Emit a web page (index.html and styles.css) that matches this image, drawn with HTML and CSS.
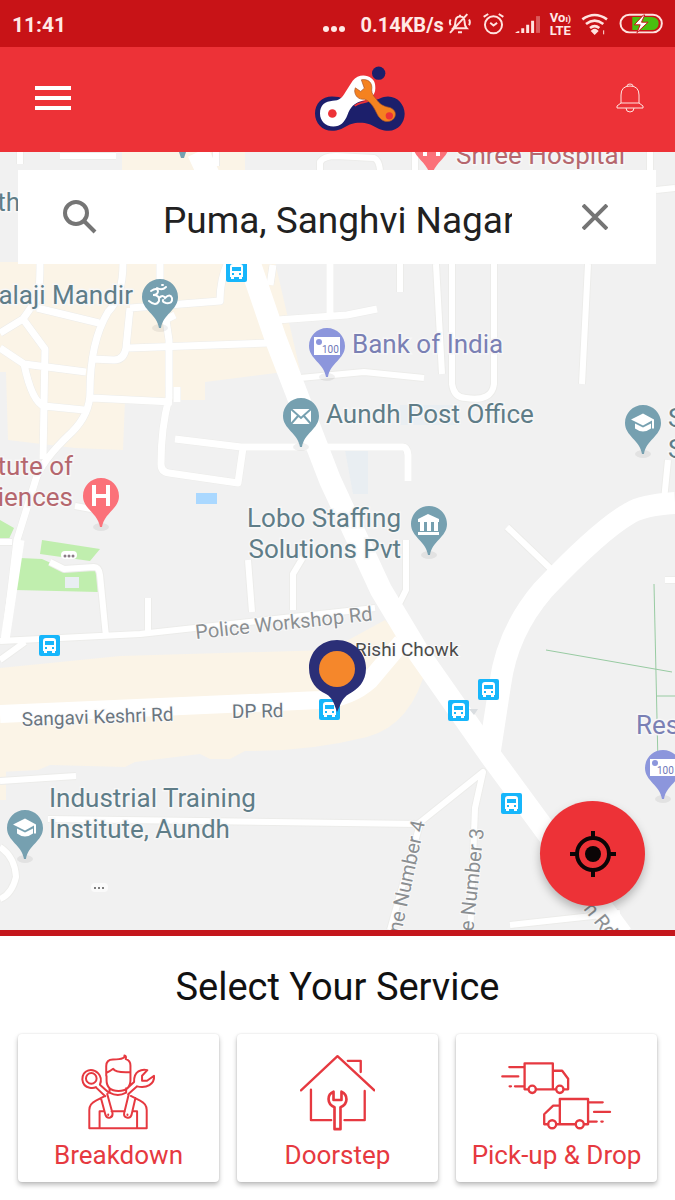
FILE: index.html
```html
<!DOCTYPE html>
<html lang="en">
<head>
<meta charset="utf-8">
<meta name="viewport" content="width=device-width, initial-scale=1">
<title>Select Your Service</title>
<link rel="stylesheet" href="styles.css">
</head>
<body>
<div class="screen">
  <div class="status">
    <span class="status-time">11:41</span>
    <div class="status-right">
      <svg class="status-dots" viewBox="0 0 24 8" width="24" height="8" aria-hidden="true"><circle cx="4" cy="4" r="3"/><circle cx="12" cy="4" r="3"/><circle cx="20" cy="4" r="3"/></svg>
      <span class="status-rate">0.14KB/s</span>
      <svg class="line" viewBox="418 36 72 68" width="24" height="23" aria-hidden="true"><path d="M434 84q6-6 6-17 0-18 14-18 14 0 14 18 0 11 6 17zM448 96h12M476 42 424 98M426 58q-5 8 0 17M481 58q5 8 0 17M454 49v-5"/></svg>
      <svg class="line alarm" viewBox="516 36 70 68" width="23" height="23" aria-hidden="true"><circle cx="551" cy="74" r="26"/><path d="m541 68 10 8 11-8M521 50l14-9M581 50l-14-9"/></svg>
      <svg class="signal" viewBox="614 40 76 60" width="25" height="20" aria-hidden="true"><path d="M614 97q6-6 13-6v6zM633 83h9v14h-9zM648 72h9v25h-9zM663 60h9v37h-9z"/><path class="faint" d="M678 46h12v51h-12z"/></svg>
      <span class="volte"><span>Vo<small>ı)</small></span><span>LTE</span></span>
      <svg class="wifi" viewBox="814 38 84 66" width="28" height="22" aria-hidden="true"><path d="M818 57q37-26 74 0M829 71q26-20 52 0M841 83q14-11 28 0"/><path d="m849 92 6 6 6-6q-6-5-12 0z"/><path class="thin" d="M882 90v12"/></svg>
      <svg class="battery" viewBox="926 38 136 64" width="45" height="21" aria-hidden="true"><rect class="case" x="930" y="43" width="126" height="54" rx="27"/><path class="charge" d="M966 50h58q22 0 22 20t-22 20h-58z"/><path class="bolt" d="m1000 44-28 30h18l-10 24 34-32h-20l10-22z"/></svg>
    </div>
  </div>

  <header class="appbar">
    <button class="icon-btn" aria-label="Open menu"><svg viewBox="0 0 36 26" width="36" height="26"><path class="menu-lines" d="M0 3h36M0 13h36M0 23h36"/></svg></button>
    <svg class="logo" viewBox="12 196 276 200" width="92" height="67" role="img" aria-label="Bike service logo">
      <path class="navy" d="M66 290c-30 0-51 22-51 51s22 52 51 52c38 0 42-24 84-24s48 24 86 24c28 0 48-24 48-51s-21-52-50-52c-18 0-28 10-44 12-26 4-70 4-86-4-14-6-22-8-38-8z"/>
      <circle class="navy" cx="206" cy="220" r="20"/>
      <path class="white" d="M30 341c0-26 16-36 38-38 20-2 28-8 38-26l22-34c14-20 42-20 56-8 10 8 12 16 12 30 0 26-20 32-36 37-30 8-38 20-48 44-8 20-20 34-42 34-24 0-40-17-40-39z"/>
      <path class="red-line" d="M190 298c-8 6-18 6-36 11-12 3-16 6-20 9"/>
      <circle class="red" cx="67" cy="341" r="13"/>
      <path class="orange" d="M154 240c20-4 35 8 31 31 0 10 6 18 14 27 10 14 18 20 36 24 18 4 24 16 20 28-6 16-28 20-42 8-12-10-14-24-24-38-8-12-14-18-26-22-16 2-28-8-29-25l2-9 16 11 11-10z"/>
      <circle class="red" cx="238" cy="348" r="11"/>
    </svg>
    <button class="icon-btn" aria-label="Notifications"><svg class="bell" viewBox="0 0 28 30" width="28" height="30"><path d="M5 20v-8q0-9 9-9t9 9v8M5 20l-4 3v2h26v-2l-4-3zM10 25q0 4 4 4t4-4M11 3q0-2 3-2t3 2"/></svg></button>
  </header>

  <main class="map">
    <svg class="map-art" viewBox="0 152 675 778" preserveAspectRatio="xMidYMid slice" role="img" aria-label="Map around Rishi Chowk, Aundh">
      <defs>
        <symbol id="pin" viewBox="0 0 36 52" overflow="visible"><ellipse cx="18" cy="49" rx="8" ry="4" fill="#000" opacity=".06"/><path d="M18 0C8 0 0 8 0 18c0 13 15 17 17 31h2c2-14 17-18 17-31C36 8 28 0 18 0z"/></symbol>
        <symbol id="bus" viewBox="0 0 21 21"><rect width="21" height="21" rx="2" fill="#17b6fb"/><path fill="#fff" d="M7 3h7q3 0 3 3v10h-1v2h-3v-2H8v2H5v-2H4V6q0-3 3-3z"/><path fill="#17b6fb" d="M6 6h9v4H6zM6 12h2v2H6zM13 12h2v2h-2z"/></symbol>
        <symbol id="cap" viewBox="0 0 26 20"><path fill="#fff" d="M13 1 1 7l12 6 9-5v8h2V7zM5 11v5q8 6 16 0v-5l-8 4z"/></symbol>
      </defs>

      <g class="built">
        <path d="M0 262h275l25 108-95 12v18h-80l-2 50-48-2-67-8-2-68H0zM122 152h123v20H122z"/>
        <path d="M0 668l120-12 210-6 55-30 42 45q-15 60-60 72-60 15-122 14l-15 8h-20l-10-5-65 8-10 5-75-2-12 5-38 2v-2H0zM0 760h6v40H0z"/>
      </g>
      <path class="pale" d="M345 450h23v44h-15zM400 405h60v20h-60z"/>
      <path class="park" d="M0 520l14 8-6 13H0zM42 540l58 9-10 12-50-7zM20 558l22 1 20 9 36-2v26l-83-2z"/>
      <path class="pale" d="M65 577h14v11H65z"/>
      <path class="water" d="M196 493h21v11h-21z"/>

      <g class="road edge">
        <path d="M40 262q0 30-3 37l-14 20-23 14M23 319l22 30-2 110M0 348l24 16 62 8M24 364q8 38 20 42l40 4M37 308l62 15M123 262q0 35-15 50-18 30-18 80 0 22-18 40-32 30-37 50L17 540 5 640M130 308l-4 40q-2 12-12 12l-22-1M130 308l90-7q0-22 8-39M160 262v18l9 60v58q-8 30-8 66 0 8 8 9l69 10 5-35M129 348l140-5M92 398l80 4M177 402v-15M163 321l12-6M175 439l66 8h162q4 0 5 8v26M277 320l70-5 30-6M330 262v54M270 285l3-20"/>
        <path d="M436 264l6 110M452 264v120q2 14 14 14 26 4 28-14V264M588 264l-6 120M400 264v28M424 378l-60-6-64 6M0 542h12M50 562l14 7 30-2q5 0 6 8l6 62M148 598v36M248 560l4 52M293 610v-36l12-20M406 540v50l-10 20M507 527l45 43M668 460l-4 40M0 641l140-7 235-26M0 660l25-18M0 781l76-5M48 819l370 5 65-52-8 36-5 130M420 824l-30 106M0 847q15 10 16 30-4 17-16 22M510 925l110-12M665 580h10M75 506l22 4M20 152v12M60 156h56M216 152v14M320 170v-8q4-6 16-6l38 2q5 2 6 12M415 152v18M650 152v18M656 190l19-2"/>
      </g>
      <g class="road">
        <path d="M40 262q0 30-3 37l-14 20-23 14M23 319l22 30-2 110M0 348l24 16 62 8M24 364q8 38 20 42l40 4M37 308l62 15M123 262q0 35-15 50-18 30-18 80 0 22-18 40-32 30-37 50L17 540 5 640M130 308l-4 40q-2 12-12 12l-22-1M130 308l90-7q0-22 8-39M160 262v18l9 60v58q-8 30-8 66 0 8 8 9l69 10 5-35M129 348l140-5M92 398l80 4M177 402v-15M163 321l12-6M175 439l66 8h162q4 0 5 8v26M277 320l70-5 30-6M330 262v54M270 285l3-20"/>
        <path class="lane" d="M436 264l6 110M452 264v120q2 14 14 14 26 4 28-14V264M588 264l-6 120M400 264v28M424 378l-60-6-64 6M0 542h12M50 562l14 7 30-2q5 0 6 8l6 62M148 598v36M248 560l4 52M293 610v-36l12-20M406 540v50l-10 20M507 527l45 43M668 460l-4 40M0 641l140-7 235-26M0 660l25-18M0 781l76-5M48 819l370 5 65-52-8 36-5 130M420 824l-30 106M0 847q15 10 16 30-4 17-16 22M510 925l110-12M665 580h10M75 506l22 4M20 152v12M60 156h56M216 152v14M320 170v-8q4-6 16-6l38 2q5 2 6 12M415 152v18M650 152v18M656 190l19-2"/>
      </g>
      <g class="highway">
        <path class="main" d="M198 152l52 112 26 76 54 140 51 110 39 65 70 100 55 75 77 105"/>
        <path class="main" d="M675 503q-32 2-45 10-30 17-87 77-36 42-43 95l-10 65"/>
        <path class="minor" d="M0 714l320-14q30-2 50-20l32-38"/>
        <path class="link" d="M20 540L5 640"/>
      </g>
      <path class="trail" d="M546 650l126 22M654 584l4 180M657 696h18"/>
      <path d="M469 709h9l-4 6z" fill="#d9dde0"/>

      <g class="pins">
        <use href="#pin" class="p-slate" x="142" y="279" width="36" height="52"/>
        <path class="glyph-line" d="M151 291q6-4 7 0 0 4-5 4 7 0 6 6-3 6-10 0M159 298q4-4 6 0 5-5 7 0 1 6-6 5-4-1-3-3M157 288q5 3 9-1M162 285h1"/>
        <use href="#pin" class="p-slate" x="283" y="398" width="36" height="52"/>
        <rect x="291" y="409" width="20" height="15" fill="#fff"/><path class="mail" d="M291 409l10 9 10-9M291 424l7-8M311 424l-7-8"/>
        <use href="#pin" class="p-slate" x="411" y="506" width="36" height="52"/>
        <path fill="#fff" d="M418 519l10-5 11 5v3h-21zM420 522h4v9h-4zM427 522h4v9h-4zM434 522h4v9h-4zM418 532h21v3h-21z"/>
        <use href="#pin" class="p-slate" x="625" y="405" width="36" height="52"/><use href="#cap" x="630" y="412" width="26" height="21"/>
        <use href="#pin" class="p-slate" x="7" y="810" width="36" height="52"/><use href="#cap" x="12" y="817" width="26" height="21"/>
        <use href="#pin" class="p-violet" x="309" y="328" width="36" height="52"/>
        <rect x="314" y="337" width="26" height="18" fill="#fff"/><circle cx="319" cy="342" r="3" class="p-violet"/><text class="note" x="322" y="353">100</text>
        <use href="#pin" class="p-violet" x="645" y="750" width="36" height="52"/>
        <rect x="650" y="759" width="26" height="17" fill="#fff"/><circle cx="655" cy="763" r="3" class="p-violet"/><text class="note" x="657" y="774">100</text>
        <use href="#pin" class="p-red" x="83" y="478" width="36" height="52"/><path class="h-mark" d="M94 485v21M108 485v21M94 496h14"/>
        <use href="#pin" class="p-red" x="413" y="127" width="36" height="52"/><path class="h-mark" d="M425 135v21M438 135v21"/>
        <path class="p-slate" d="M179 152h7l-2 6h-3z"/>
      </g>
      <g>
        <use href="#bus" x="226" y="261" width="21" height="21"/><use href="#bus" x="39" y="635" width="21" height="21"/><use href="#bus" x="319" y="699" width="21" height="21"/><use href="#bus" x="448" y="700" width="21" height="21"/><use href="#bus" x="478" y="679" width="21" height="21"/><use href="#bus" x="501" y="793" width="21" height="21"/>
      </g>

      <g class="label slate">
        <text x="20" y="211" text-anchor="end">th</text>
        <text x="133" y="304" text-anchor="end">alaji Mandir</text>
        <text x="326" y="423">Aundh Post Office</text>
        <text x="401" y="527" text-anchor="end">Lobo Staffing</text>
        <text x="401" y="558" text-anchor="end">Solutions Pvt</text>
        <text x="49" y="807">Industrial Training</text>
        <text x="49" y="838">Institute, Aundh</text>
        <text x="668" y="427">S</text><text x="668" y="458">S</text>
      </g>
      <g class="label violet"><text x="352" y="353">Bank of India</text><text x="636" y="734">Res</text></g>
      <g class="label rose"><text x="456" y="164">Shree Hospital</text><text x="73" y="475" text-anchor="end">tute of</text><text x="73" y="506" text-anchor="end">iences</text></g>
      <g class="street">
        <text class="grey" transform="translate(196 639) rotate(-6)">Police Workshop Rd</text>
        <text transform="translate(22 726) rotate(-2)">Sangavi Keshri Rd</text>
        <text transform="translate(232 718) rotate(-1)">DP Rd</text>
        <text class="dark" x="355" y="656">Rishi Chowk</text>
        <text class="grey" text-anchor="end" transform="translate(425 822) rotate(-78)">Lane Number 4</text>
        <text class="grey" text-anchor="end" transform="translate(484 829) rotate(-84)">Lane Number 3</text>
        <text class="grey" transform="translate(583 909) rotate(51)">n Rd</text>
      </g>
      <rect x="61" y="551" width="16" height="8" rx="4" fill="#fff"/>
      <g fill="#8a7b86"><circle cx="65" cy="556" r="1.500"/><circle cx="69" cy="556" r="1.500"/><circle cx="73" cy="556" r="1.500"/></g>
      <rect x="91" y="883" width="17" height="9" rx="4" fill="#fafafa"/>
      <g fill="#555"><circle cx="95" cy="888" r="1"/><circle cx="99" cy="888" r="1"/><circle cx="103" cy="888" r="1"/></g>

      <path fill="#2b2f77" d="M337 640c-16 0-28 12-28 28 0 14 8 22 17 26 7 4 8 10 11 18 4-8 5-14 12-18 9-5 17-12 17-26 0-16-13-28-29-28z"/>
      <circle cx="337" cy="669" r="18" fill="#f5872b"/>
    </svg>

    <form class="search" role="search">
      <svg class="search-icon" viewBox="0 0 34 34" width="34" height="34" aria-hidden="true"><circle cx="13" cy="13" r="11"/><path d="m21 21 11 11"/></svg>
      <input type="text" aria-label="Location" value="Puma, Sanghvi Nagar">
      <button type="button" class="icon-btn" aria-label="Clear"><svg class="clear" viewBox="0 0 26 26" width="26" height="26"><path d="m1 1 24 24M25 1 1 25"/></svg></button>
    </form>

    <button class="locate" aria-label="My location">
      <svg viewBox="0 0 46 46" width="46" height="46"><circle cx="23" cy="23" r="16" fill="none" stroke="#0b0506" stroke-width="4"/><circle cx="23" cy="23" r="8" fill="#0b0506"/><path d="M23 0v8M23 38v8M0 23h8M38 23h8" stroke="#0b0506" stroke-width="4"/></svg>
    </button>
  </main>

  <section class="services">
    <h1>Select Your Service</h1>
    <div class="cards">
      <button class="card">
        <svg viewBox="244 96 226 240" width="75" height="80" aria-hidden="true"><path d="M269 325V270q0-18 20-28l28-14M394 228l28 14q20 10 20 28v55M269 325h173M300 325v-51h14M336 274h40M400 274h13v51M304 234l14 52q4 10 14 7 8-3 7-13l-16-58M408 234l-12 52q-4 10-14 7-10-3-8-13l14-58M320 168v-30q0-20 20-20 22 0 30-4 6-2 5-8 6 0 4 11 14 4 14 19v44q0 33-36 33t-36-33v-12M321 158q8-3 20-12 6 12 50 10M330 205v13q25 14 50 0v-13M301 194l27 24M289 202l28 27M413 199l-27 24M404 186l-22 20M301 194q8-20-5-34-13-13-30-9-18 6-18 27 2 22 22 25 12 2 19-2M404 186q-1-23 13-32 12-8 27-4l-16 17v15h15l21-15q2 18-14 28-14 9-37 4"/><circle cx="275" cy="175" r="16"/><path d="M326 284v1M384 284v1"/></svg>
        <span>Breakdown</span>
      </button>
      <button class="card">
        <svg class="bold" viewBox="900 96 226 240" width="75" height="80" aria-hidden="true"><path d="m903 211 110-103 111 103M1044 122h39v34M933 209v92h61M1095 213v88h-61"/><path class="wrench" d="M1004 328v-66q-18-8-18-25 0-16 15-22v25h24v-25q15 6 15 23 0 17-18 24v66z"/></svg>
        <span>Doorstep</span>
      </button>
      <button class="card">
        <svg class="bold" viewBox="498 90 334 240" width="111" height="80" aria-hidden="true"><path d="M579 202h-10v-78h85v78h-50M654 146h28l18 24v32h-12M654 202h8M523 135h46M502 163h48M540 193h28M524 193h4"/><circle cx="592" cy="202" r="11"/><circle cx="675" cy="202" r="11"/><path d="M748 307h12v-76h-85v76h48M675 251h-20l-27 26v30h12M664 307h11M760 241h44M778 270h48M760 299h26M800 299h4"/><circle cx="652" cy="307" r="12"/><circle cx="735" cy="307" r="12"/></svg>
        <span>Pick-up &amp; Drop</span>
      </button>
    </div>
  </section>
</div>
</body>
</html>
```
FILE: styles.css
```css
* { box-sizing: border-box; }
body { margin: 0; font-family: Roboto, "Liberation Sans", sans-serif; background: #fff; }
button { font: inherit; border: 0; padding: 0; background: none; cursor: pointer; }
svg { display: block; flex: none; }
.screen { display: flex; flex-direction: column; min-height: 100vh; }

.status { display: flex; align-items: center; justify-content: space-between; height: 47px; padding: 0 11px 0 12px; background: #c81317; color: #ffe9e6; font-weight: 700; }
.status-time { font-size: 21px; padding-top: 2px; }
.status-right { display: flex; align-items: center; gap: 10px; }
.status-dots { fill: #ffe9e6; margin: 10px 4px 0 0; }
.status-rate { font-size: 20px; padding-top: 2px; margin-right: -6px; }
.line, .wifi { fill: none; stroke: #ffe3df; stroke-width: 6; }
.signal { fill: #ffe3df; }
.signal .faint { opacity: .35; }
.volte { display: flex; flex-direction: column; font-size: 13px; line-height: 11px; }
.volte small { font-size: 9px; }
.wifi { stroke-width: 8; }
.wifi .thin { stroke-width: 3; }
.battery .case { fill: none; stroke: #ffe3df; stroke-width: 6; }
.battery .charge { fill: #49c10f; }
.battery .bolt { fill: #fff; stroke: #c81317; stroke-width: 3; }

.appbar { display: flex; align-items: center; justify-content: space-between; height: 105px; padding: 0 31px 3px 35px; background: #ed3237; }
.logo { margin-left: 32px; }
.icon-btn { display: flex; }
.menu-lines { stroke: #fff; stroke-width: 4; }
.bell { fill: none; stroke: #ffe3df; stroke-width: 1; }
.navy { fill: #1c1f6b; }
.white { fill: #fff; }
.red { fill: #ed3237; }
.red-line { fill: none; stroke: #ed3237; stroke-width: 5; }
.orange { fill: #f58220; stroke: #a5502a; stroke-width: 2; }

.map { position: relative; flex: 1; min-height: 480px; border-bottom: 6px solid #c4161c; overflow: hidden; background: #f1f1f1; }
.map-art { position: absolute; inset: 0; width: 100%; height: 100%; }
.built { fill: #fbf4e7; }
.pale { fill: #e9eef2; }
.park { fill: #c0eeae; }
.water { fill: #aad8ff; }
.road { fill: none; stroke: #fff; stroke-width: 7; stroke-linejoin: round; }
.road.edge { stroke: #ececea; stroke-width: 8; }
.road .lane { stroke-width: 6; }
.highway { fill: none; stroke: #fff; stroke-linejoin: round; }
.main { stroke-width: 22; }
.minor { stroke-width: 18; }
.link { stroke-width: 9; }
.trail { fill: none; stroke: #98cba2; stroke-width: 1; }
.p-slate { fill: #76a0b0; }
.p-violet { fill: #8c96dc; }
.p-red { fill: #fb7179; }
.glyph-line { fill: none; stroke: #fff; stroke-width: 2; stroke-linecap: round; }
.mail { fill: none; stroke: #76a0b0; stroke-width: 2; }
.h-mark { fill: none; stroke: #fff; stroke-width: 4; }
.note { font-size: 10px; fill: #7078b8; }
.label { font-size: 26px; paint-order: stroke; stroke: #f7f7f7; stroke-width: 3px; }
.slate { fill: #5f7d88; }
.violet { fill: #7a80b4; }
.rose { fill: #b5676e; }
.street { font-size: 19px; fill: #6b7680; paint-order: stroke; stroke: #fafafa; stroke-width: 2px; }
.grey { font-size: 20px; fill: #8b8f92; }
.dark { fill: #4c4c4c; }

.search { position: absolute; top: 18px; left: 18px; right: 19px; height: 94px; display: flex; align-items: center; padding: 0 48px 0 45px; background: #fff; }
.search-icon, .clear { fill: none; stroke: #757575; stroke-width: 4; }
.search input { flex: 1; min-width: 0; margin: 0 70px 0 66px; padding: 6px 0 0; border: 0; outline: 0; background: none; font: 37px Roboto, "Liberation Sans", sans-serif; color: #212121; }
.locate { position: absolute; right: 30px; bottom: 24px; width: 105px; height: 105px; display: flex; align-items: center; justify-content: center; border-radius: 50%; background: #ed3237; box-shadow: 0 5px 10px rgba(0, 0, 0, .25); }

.services { padding: 29px 18px 18px; background: #fff; }
.services h1 { margin: 0 0 24px; font-size: 38px; line-height: 45px; font-weight: 400; text-align: center; color: #111; }
.cards { display: grid; grid-template-columns: repeat(3, 1fr); gap: 18px; }
.card { display: flex; flex-direction: column; align-items: center; min-width: 0; gap: 7px; padding: 18px 0 10px; border-radius: 4px; background: #fff; box-shadow: 0 3px 5px rgba(0, 0, 0, .25), 0 0 2px rgba(0, 0, 0, .12); color: #e63940; font-size: 26px; line-height: 33px; white-space: nowrap; }
.card svg { fill: none; stroke: #e63940; stroke-width: 6; stroke-linejoin: round; stroke-linecap: round; }
.card .bold { stroke-width: 7; }
.card .wrench { stroke-width: 8; }
```
